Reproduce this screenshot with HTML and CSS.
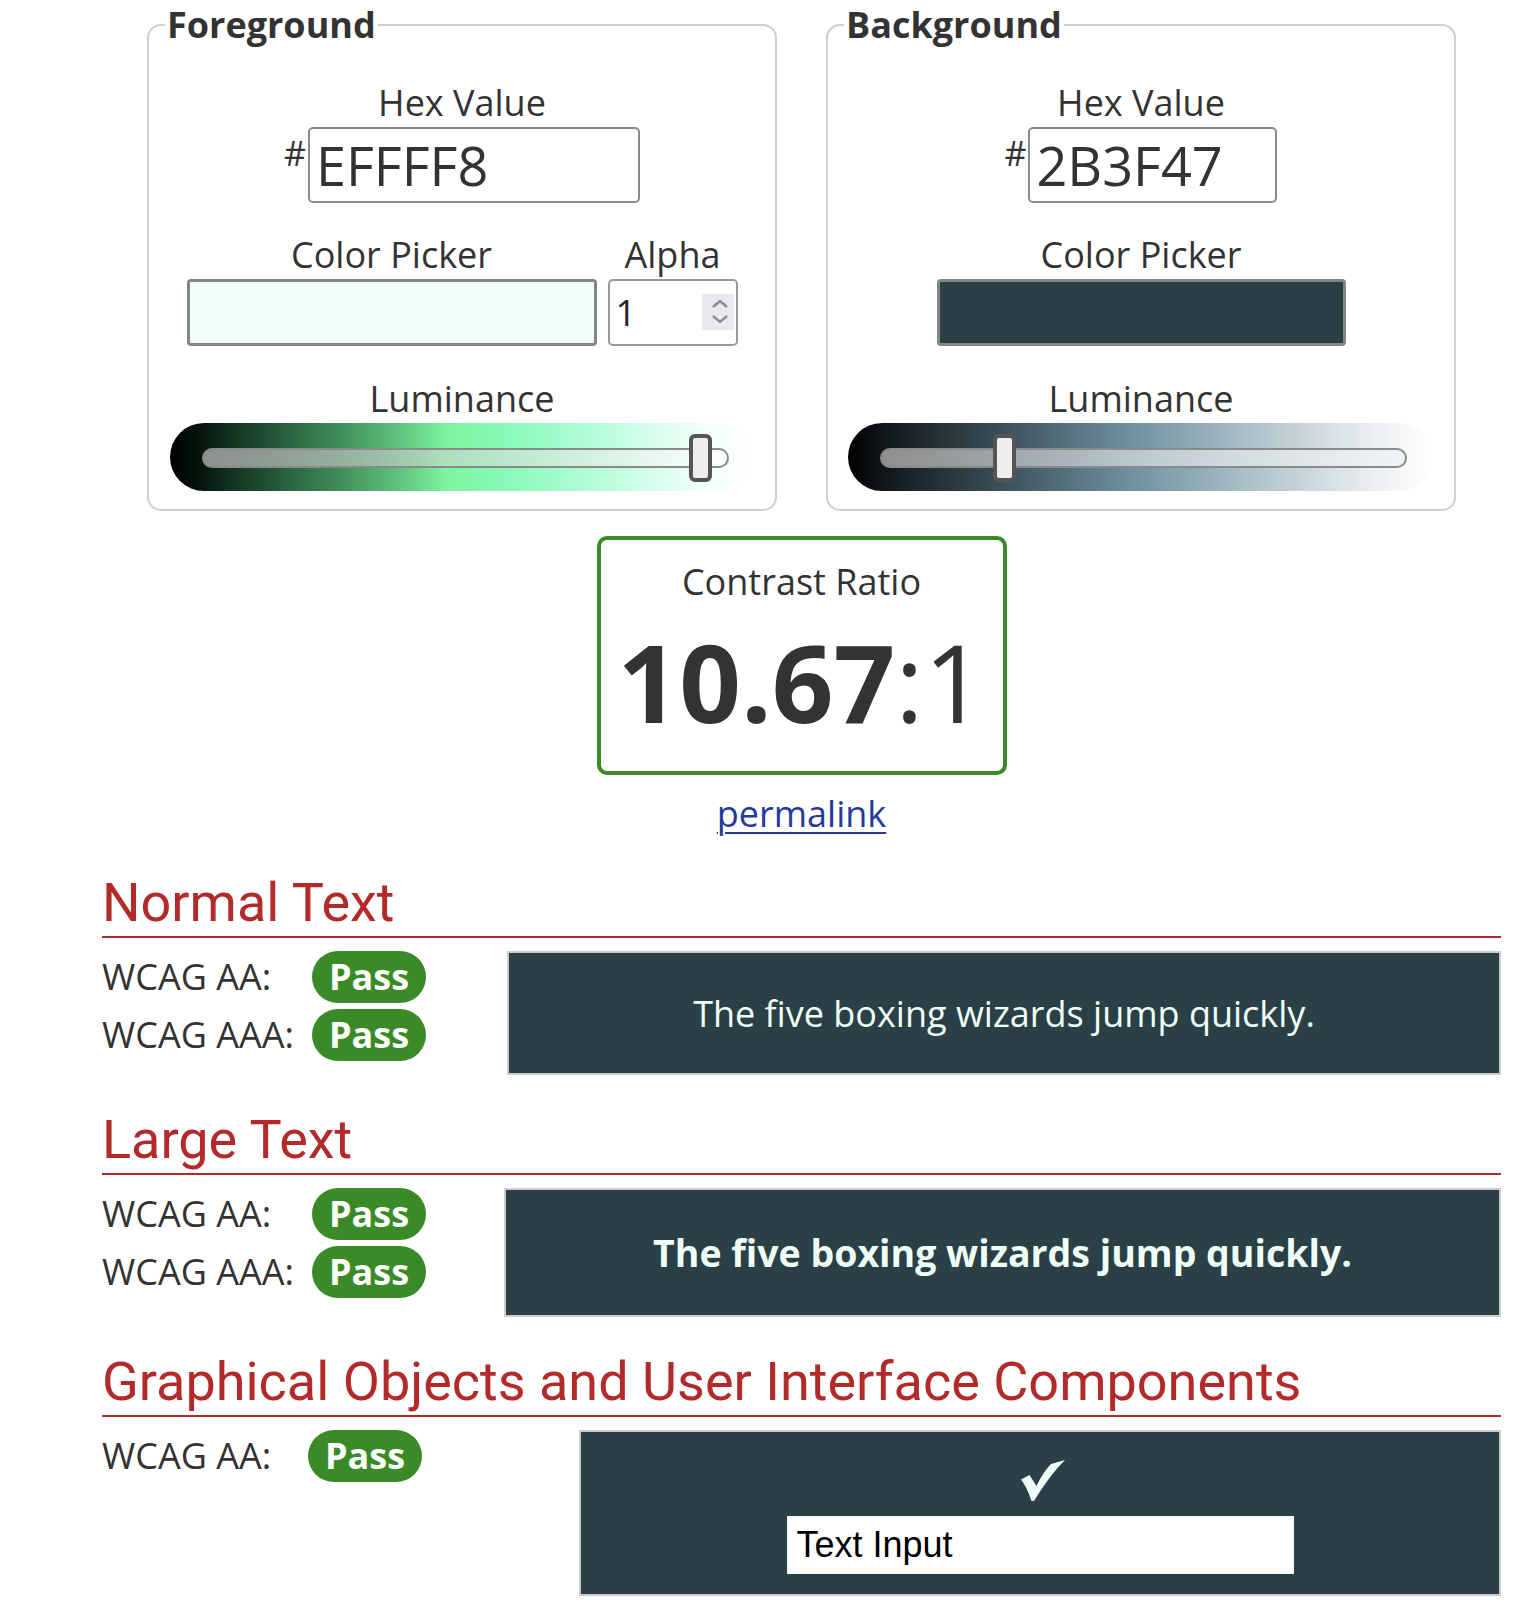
FILE: index.html
```html
<!DOCTYPE html>
<html lang="en">
<head>
<meta charset="utf-8">
<title>Contrast Checker</title>
<link rel="stylesheet" href="styles.css">
</head>
<body>
<main class="page">
  <div class="pickers">
    <fieldset class="panel">
      <legend class="panel-title">Foreground</legend>
      <label class="lbl lbl-first">Hex Value</label>
      <div class="hex-row">
        <span class="hash">#</span>
        <input class="hex-input hex-fg" type="text" value="EFFFF8">
      </div>
      <div class="picker-row">
        <div class="picker-col">
          <label class="lbl lbl-gap">Color Picker</label>
          <div class="swatch swatch-fg"></div>
        </div>
        <div class="alpha-col">
          <label class="lbl lbl-gap">Alpha</label>
          <div class="alpha-box">
            <span class="alpha-val">1</span>
            <span class="spin">
              <svg width="32" height="36" viewBox="0 0 32 36"><polyline points="11,13 18,7 25,13" fill="none" stroke="#8a8a8f" stroke-width="2.4"/><polyline points="11,22 18,28 25,22" fill="none" stroke="#8a8a8f" stroke-width="2.4"/></svg>
            </span>
          </div>
        </div>
      </div>
      <label class="lbl lbl-gap2">Luminance</label>
      <div class="slider slider-fg">
        <div class="track track-fg"></div>
        <span class="thumb thumb-fg"></span>
      </div>
    </fieldset>
    <fieldset class="panel">
      <legend class="panel-title">Background</legend>
      <label class="lbl lbl-first">Hex Value</label>
      <div class="hex-row">
        <span class="hash">#</span>
        <input class="hex-input hex-bg" type="text" value="2B3F47">
      </div>
      <div class="picker-row">
        <div class="picker-col">
          <label class="lbl lbl-gap">Color Picker</label>
          <div class="swatch swatch-bg"></div>
        </div>
      </div>
      <label class="lbl lbl-gap2">Luminance</label>
      <div class="slider slider-bg">
        <div class="track track-bg"></div>
        <span class="thumb thumb-bg"></span>
      </div>
    </fieldset>
  </div>

  <div class="ratio-box">
    <div class="ratio-label">Contrast Ratio</div>
    <div class="ratio-value"><b>10.67</b>:1</div>
  </div>
  <div class="permalink-wrap"><a class="permalink" href="#">permalink</a></div>

  <section class="result">
    <h2 class="result-title">Normal Text</h2>
    <div class="result-body">
      <div class="checks checks-1">
        <div class="check-row"><span class="check-label">WCAG AA:</span><span class="badge">Pass</span></div>
        <div class="check-row"><span class="check-label">WCAG AAA:</span><span class="badge">Pass</span></div>
      </div>
      <div class="sample sample-normal">The five boxing wizards jump quickly.</div>
    </div>
  </section>

  <section class="result">
    <h2 class="result-title">Large Text</h2>
    <div class="result-body">
      <div class="checks checks-2">
        <div class="check-row"><span class="check-label">WCAG AA:</span><span class="badge">Pass</span></div>
        <div class="check-row"><span class="check-label">WCAG AAA:</span><span class="badge">Pass</span></div>
      </div>
      <div class="sample sample-large">The five boxing wizards jump quickly.</div>
    </div>
  </section>

  <section class="result">
    <h2 class="result-title">Graphical Objects and User Interface Components</h2>
    <div class="result-body">
      <div class="checks checks-3">
        <div class="check-row"><span class="check-label check-label-short">WCAG AA:</span><span class="badge">Pass</span></div>
      </div>
      <div class="sample sample-ui">
        <svg class="tick" width="44" height="41" viewBox="0 0 44 41"><path d="M0 19.5 L8.5 15 L15.5 26 C20 16.5 25 9 30 4 L44 0 C34 10 23 24.5 13 41 L10.5 41 C7.5 32 4 24.5 0 19.5 Z" fill="#EFFFF8"/></svg>
        <div class="ui-input">Text Input</div>
      </div>
    </div>
  </section>
</main>
</body>
</html>
```

FILE: styles.css
```css
* { box-sizing: border-box; }

body {
  margin: 0;
  background: #ffffff;
  color: #333333;
  font-family: "Open Sans", "Liberation Sans", sans-serif;
  font-size: 36px;
}

.page {
  width: 1536px;
  padding: 0 35px 0 102px;
}

/* ---------- picker panels ---------- */
.pickers {
  display: flex;
  justify-content: center;
  gap: 49px;
}

.panel {
  flex: 0 0 630px;
  width: 630px;
  min-width: 0;
  margin: 0;
  padding: 0 0 18px;
  border: 2px solid #cfcfcf;
  border-radius: 14px;
  display: flex;
  flex-direction: column;
  align-items: center;
}

.panel-title {
  margin-left: 16px;
  padding: 0 2px;
  font-weight: 700;
  line-height: 49px;
  color: #333;
}

.lbl {
  display: block;
  text-align: center;
  line-height: 48px;
  color: #333;
}

.lbl-first { margin-top: 30px; }
.lbl-gap { margin-top: 28px; }
.lbl-gap2 { margin-top: 29px; }

.hex-row {
  display: flex;
  align-items: flex-start;
  gap: 2px;
}

.hash {
  font-size: 34px;
  line-height: 40px;
  margin-top: 6px;
}

.hex-input {
  height: 76px;
  border: 2px solid #8a8a8a;
  border-radius: 5px;
  padding: 0 6px;
  font-family: "Open Sans", sans-serif;
  font-size: 54px;
  color: #333;
  background: #fff;
  outline: none;
}

.hex-fg { width: 332px; }
.hex-bg { width: 249px; }

.picker-row {
  display: flex;
  gap: 11px;
}

.picker-col,
.alpha-col {
  display: flex;
  flex-direction: column;
  align-items: center;
}

.swatch {
  width: 410px;
  height: 67px;
  border: 3px solid #858585;
  border-radius: 4px;
}

.swatch-fg { background: #EFFFF8; }
.swatch-bg { background: #2B3F47; width: 409px; }

.alpha-box {
  position: relative;
  width: 130px;
  height: 67px;
  border: 2px solid #9a9a9a;
  border-radius: 5px;
  padding-left: 6px;
  display: flex;
  align-items: center;
}

.alpha-val {
  font-size: 36px;
  line-height: 48px;
  color: #222;
}

.spin {
  position: absolute;
  right: 2px;
  top: 13px;
  width: 32px;
  height: 36px;
  background: #e9e9ed;
  display: block;
}

.spin svg { display: block; }

/* ---------- luminance slider ---------- */
.slider {
  position: relative;
  width: 584px;
  height: 68px;
  border-radius: 34px;
  padding-top: 25px;
}

.slider-bg { width: 586px; }

.slider-fg {
  background: linear-gradient(to right,
    #000000 0%, #04140b 5%, #11301f 10%, #1f4d33 16%, #2e6c46 22%,
    #3f8d5a 29%, #52ad6e 35%, #66cd84 41%, #7cf39d 47%, #84f8b0 54%,
    #90fabf 61%, #a6fbcf 68%, #c0fde0 76%, #dcfeee 84%, #f2fff9 92%, #ffffff 100%);
}

.slider-bg {
  background: linear-gradient(to right,
    #000000 0%, #0f1518 6%, #1d282d 12%, #2c3b42 19%, #3b4f58 26%,
    #4b6470 33%, #5c7886 40%, #6c8d9c 47%, #809eab 54%, #95aeba 61%,
    #abbfc8 68%, #c3d1d7 76%, #dbe3e7 84%, #f0f3f5 92%, #ffffff 100%);
}

.track {
  height: 20px;
  margin: 0 25px 0 32px;
  border: 2px solid #8a8a8a;
  border-radius: 10px;
}

.track-fg {
  background: linear-gradient(to right, rgba(150,152,150,0.95) 0%, rgba(190,215,200,0.7) 45%, rgba(255,255,255,0.7) 100%);
}

.track-bg {
  margin-right: 27px;
  background: linear-gradient(to right, rgba(150,150,150,0.95) 0%, rgba(200,210,215,0.8) 45%, rgba(240,243,245,0.9) 100%);
}

.thumb {
  position: absolute;
  top: 11px;
  width: 23px;
  height: 48px;
  border: 4px solid #555555;
  border-radius: 6px;
  background: #eeeeee;
}

.thumb-fg { left: 519px; }
.thumb-bg { left: 145px; }

/* ---------- contrast ratio ---------- */
.ratio-box {
  width: 410px;
  margin: 25px auto 0;
  border: 4px solid #3b8a28;
  border-radius: 10px;
  padding: 18px 0 35px;
  text-align: center;
}

.ratio-label {
  line-height: 48px;
  color: #333;
}

.ratio-value {
  margin-top: 22px;
  font-size: 108px;
  line-height: 108px;
  color: #333;
  font-weight: 400;
}

.ratio-value b { font-weight: 700; }

.permalink-wrap {
  margin-top: 15px;
  text-align: center;
  line-height: 48px;
}

.permalink {
  color: #26399d;
  text-decoration: underline;
  text-decoration-thickness: 2px;
  text-underline-offset: 5px;
}

/* ---------- results ---------- */
.result-title {
  margin: 33px 0 0;
  padding-bottom: 2px;
  border-bottom: 2px solid #b22a2a;
  font-family: Roboto, "Liberation Sans", sans-serif;
  font-weight: 400;
  font-size: 54px;
  line-height: 63px;
  color: #b22a2a;
}

.result-body {
  display: flex;
  align-items: flex-start;
  margin-top: 13px;
}

.checks {
  display: flex;
  flex-direction: column;
  gap: 6px;
}

.checks-1 { width: 405px; }
.checks-2 { width: 402px; }
.checks-3 { width: 477px; }

.check-row {
  display: flex;
  align-items: center;
  height: 52px;
}

.check-label {
  width: 210px;
  color: #333;
  line-height: 48px;
}

.check-label-short { width: 206px; }

.badge {
  width: 114px;
  height: 52px;
  border-radius: 26px;
  background: #3b8a28;
  color: #ffffff;
  font-weight: 700;
  line-height: 52px;
  text-align: center;
}

.sample {
  flex: 1;
  background: #2B3F47;
  border: 2px solid #cccccc;
  color: #EFFFF8;
  display: flex;
  align-items: center;
  justify-content: center;
}

.sample-normal {
  height: 124px;
  font-size: 36px;
}

.sample-large {
  height: 129px;
  font-size: 37.5px;
  font-weight: 700;
}

.sample-ui {
  height: 166px;
  flex-direction: column;
  justify-content: flex-start;
  padding-top: 28px;
}

.tick { display: block; margin-left: 6px; }

.ui-input {
  margin-top: 15px;
  width: 507px;
  height: 58px;
  background: #ffffff;
  border: 2px solid #EFFFF8;
  color: #000;
  font-family: "Liberation Sans", Arial, sans-serif;
  font-size: 36px;
  line-height: 54px;
  padding-left: 8px;
}
```
